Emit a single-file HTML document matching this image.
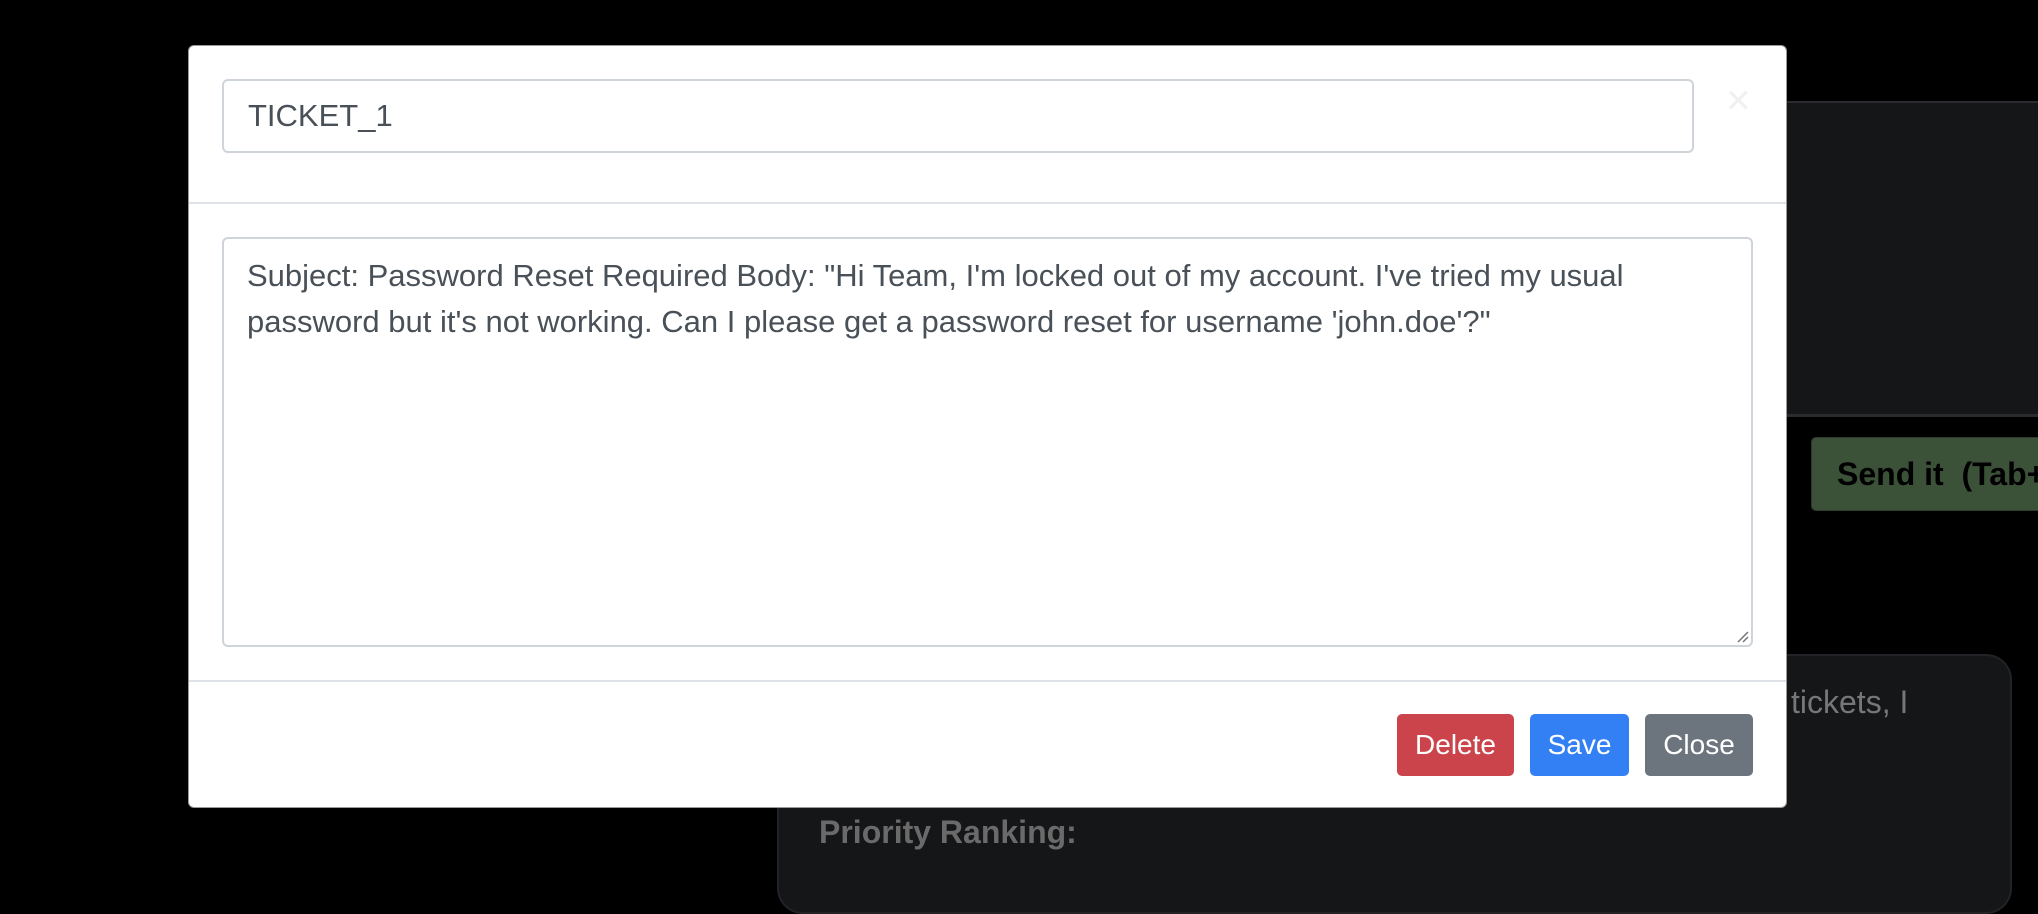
<!DOCTYPE html>
<html><head><style>
*{box-sizing:border-box;margin:0;padding:0}
body{width:2038px;height:848px;background:#000;position:relative;overflow:hidden;font-family:"Liberation Sans",Arial,sans-serif}
.abs{position:absolute}
.panel1{left:1786px;top:101px;width:300px;height:316px;background:#151618;border-top:2px solid #2a2b2e;border-bottom:3px solid #2a2b2e}
.send{left:1811px;top:437px;width:300px;height:74px;background:#3b5238;border:1px solid #2c3b2a;border-radius:5px;color:#000;font-weight:bold;font-size:32px;line-height:72px;padding-left:25px;white-space:pre}
.panel2{left:777px;top:654px;width:1235px;height:260px;background:#151618;border:2px solid #222327;border-radius:26px}
.gt{color:#777;font-size:32px}
.modal{left:188px;top:45px;width:1599px;height:763px;background:#fff;border-radius:6px;border:1px solid #999}
.inp{left:222px;top:79px;width:1472px;height:74px;border:2px solid #ced4da;border-radius:6px;font-size:31px;color:#495057;padding-left:24px;line-height:70px}
.ta{left:222px;top:237px;width:1531px;height:410px;border:2px solid #ced4da;border-radius:6px;font-size:31px;color:#495057;padding:14px 23px;line-height:45.5px}
.hr{left:189px;height:2px;width:1597px;background:#dee2e6}
.btn{top:714px;height:62px;border-radius:5px;color:#fff;font-size:28px;line-height:62px;text-align:center}
</style></head><body>
<div class="abs panel1"></div>
<div class="abs send">Send it  (Tab+Enter)</div>
<div class="abs panel2"></div>
<div class="abs gt" style="left:1791px;top:684px">tickets, I</div>
<div class="abs gt" style="left:819px;top:814px;font-weight:bold;color:#6a6a6a">Priority Ranking:</div>
<div class="abs modal"></div>
<div class="abs inp">TICKET_1</div>
<div class="abs" style="left:1726px;top:76px;font-size:42px;color:#f0f0f0">×</div>
<div class="abs hr" style="top:202px"></div>
<div class="abs ta">Subject: Password Reset Required Body: "Hi Team, I'm locked out of my account. I've tried my usual password but it's not working. Can I please get a password reset for username 'john.doe'?"</div>
<svg class="abs" style="left:1736px;top:630px" width="14" height="14"><path d="M2 12L12 2M7 12L12 7" stroke="#777" stroke-width="1.5"/></svg>
<div class="abs hr" style="top:680px"></div>
<div class="abs btn" style="left:1397px;width:117px;background:#cc444b">Delete</div>
<div class="abs btn" style="left:1530px;width:99px;background:#3380f5">Save</div>
<div class="abs btn" style="left:1645px;width:108px;background:#6c757d">Close</div>
</body></html>
